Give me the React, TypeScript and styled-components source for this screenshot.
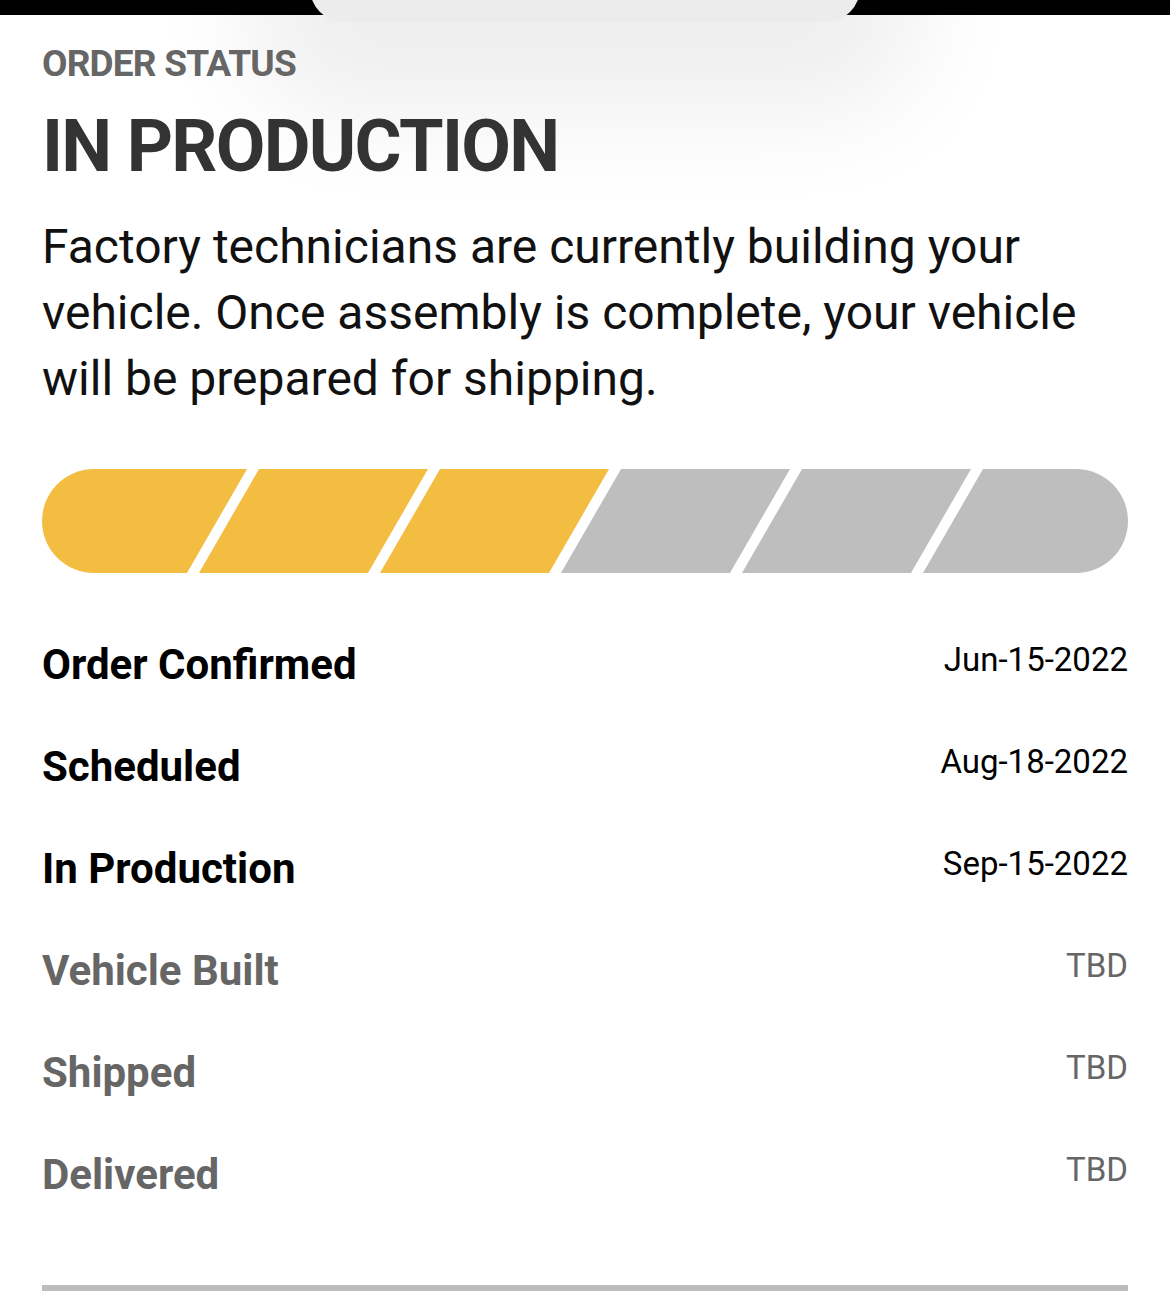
import styled, { createGlobalStyle } from 'styled-components';

const GlobalStyle = createGlobalStyle`
    html, body {
        margin: 0;
        padding: 0;
        background: #ffffff;
    }
    body {
        font-family: Roboto, "Liberation Sans", Arial, sans-serif;
        -webkit-font-smoothing: antialiased;
    }
`;

const Screen = styled.div`
    width: 1170px;
    min-height: 1303px;
    background: #ffffff;
    overflow: hidden;
`;

const StatusBar = styled.div`
    position: relative;
    height: 15px;
    background: #000;
`;

const Notch = styled.div`
    position: absolute;
    left: 310px;
    top: -40px;
    width: 550px;
    height: 62px;
    background: #ececec;
    border-radius: 0 0 34px 34px;
    box-shadow: 0 30px 110px 60px rgba(0, 0, 0, 0.07);
    z-index: 1;
`;

const Content = styled.main`
    position: relative;
    z-index: 2;
    padding: 27px 42px 0;
`;

const Eyebrow = styled.div`
    font-size: 37px;
    line-height: 44px;
    font-weight: 700;
    color: #666666;
    letter-spacing: -0.8px;
`;

const Title = styled.h1`
    margin: 16px 0 0;
    font-size: 72px;
    line-height: 90px;
    font-weight: 700;
    color: #333333;
    letter-spacing: -1.7px;
`;

const Description = styled.p`
    margin: 22px 0 0;
    font-size: 48px;
    line-height: 66px;
    font-weight: 400;
    color: #111111;
`;

const Track = styled.div`
    margin-top: 57px;
    height: 104px;
    border-radius: 52px;
    overflow: hidden;
`;

const Stripes = styled.div`
    display: flex;
    gap: 12px;
    height: 100%;
    margin: 0 -40px;
`;

const Stripe = styled.div<{ $done: boolean; $edge: boolean }>`
    flex: 0 0 ${(p) => (p.$edge ? '215px' : '169px')};
    height: 100%;
    background: ${(p) => (p.$done ? '#f3bd42' : '#bebebe')};
    transform: skewX(-30deg);
`;

const Steps = styled.ul`
    list-style: none;
    margin: 67px 0 0;
    padding: 0;
`;

const Step = styled.li`
    display: flex;
    justify-content: space-between;
    align-items: flex-start;
    height: 102px;
`;

const StepName = styled.span<{ $pending: boolean }>`
    font-size: 42px;
    line-height: 50px;
    font-weight: 700;
    color: ${(p) => (p.$pending ? '#666666' : '#000000')};
`;

const StepDate = styled.span<{ $pending: boolean }>`
    font-size: 33px;
    line-height: 40px;
    font-weight: 400;
    color: ${(p) => (p.$pending ? '#666666' : '#000000')};
`;

const Divider = styled.hr`
    margin: 33px 0 0;
    border: none;
    height: 6px;
    background: #bdbdbd;
`;

const steps = [
    { name: 'Order Confirmed', date: 'Jun-15-2022', done: true },
    { name: 'Scheduled', date: 'Aug-18-2022', done: true },
    { name: 'In Production', date: 'Sep-15-2022', done: true },
    { name: 'Vehicle Built', date: 'TBD', done: false },
    { name: 'Shipped', date: 'TBD', done: false },
    { name: 'Delivered', date: 'TBD', done: false },
];

const App = () => {
    const completed = steps.filter((s) => s.done).length;

    return (
        <Screen>
            <GlobalStyle />
            <StatusBar>
                <Notch />
            </StatusBar>
            <Content>
                <Eyebrow>ORDER STATUS</Eyebrow>
                <Title>IN PRODUCTION</Title>
                <Description>
                    Factory technicians are currently building your vehicle. Once assembly is complete, your vehicle
                    will be prepared for shipping.
                </Description>
                <Track>
                    <Stripes>
                        {steps.map((s, i) => (
                            <Stripe key={s.name} $done={i < completed} $edge={i === 0 || i === steps.length - 1} />
                        ))}
                    </Stripes>
                </Track>
                <Steps>
                    {steps.map((s) => (
                        <Step key={s.name}>
                            <StepName $pending={!s.done}>{s.name}</StepName>
                            <StepDate $pending={!s.done}>{s.date}</StepDate>
                        </Step>
                    ))}
                </Steps>
                <Divider />
            </Content>
        </Screen>
    );
};

export default App;
